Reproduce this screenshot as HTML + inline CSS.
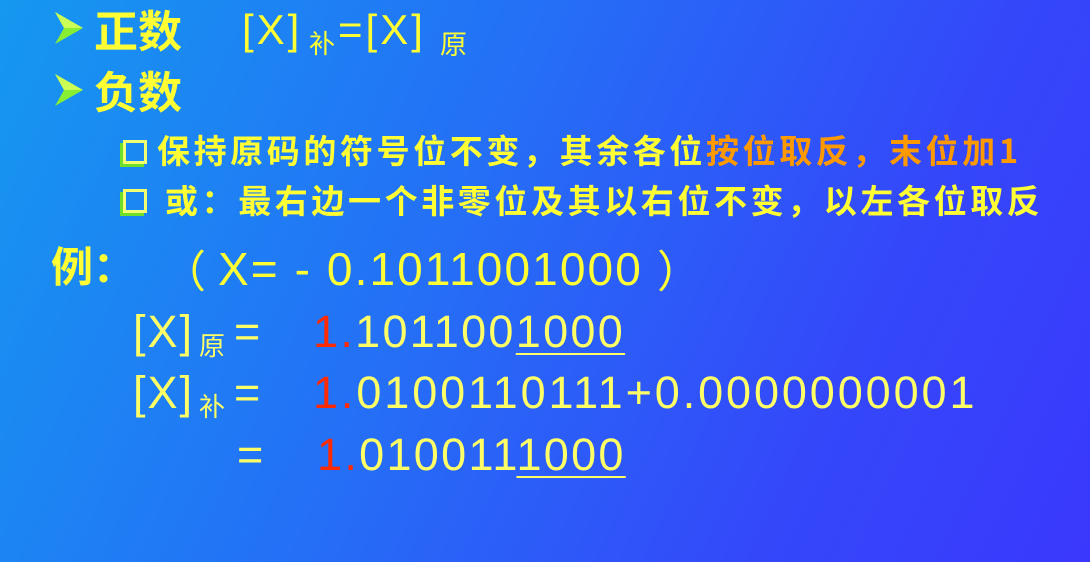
<!DOCTYPE html>
<html><head><meta charset="utf-8"><style>
html,body{margin:0;padding:0}
body{width:1090px;height:562px;overflow:hidden;position:relative;background:linear-gradient(115deg,#1598f0 0%,#2470f6 40%,#3448fa 75%,#3a38fc 100%);font-family:"Liberation Sans","Noto Sans CJK SC",sans-serif;color:#ffff33}
.a{position:absolute;white-space:nowrap;line-height:1}
.cjk{font-family:"Noto Sans CJK SC","WenQuanYi Zen Hei",sans-serif}
.b{font-weight:bold}
.y2{color:#ffff66}
.o{color:#ff9900}
.r{color:#ff2a00}
.sq{position:absolute;width:18px;height:18px;border:3px solid #f2ff70;box-shadow:-3px 3px 0 #6ee02a;box-sizing:content-box;background:transparent}
.u{text-decoration:underline;text-decoration-thickness:2px;text-underline-offset:6px}
</style></head><body>
<svg class="a" style="left:55px;top:12px" width="28" height="32" viewBox="0 0 28 32"><polygon points="0,0 28,16 0,32 9,16" fill="#88ee33"/><polygon points="0,0 28,16 9,16" fill="#ccff55"/></svg>
<svg class="a" style="left:55px;top:74px" width="28" height="32" viewBox="0 0 28 32"><polygon points="0,0 28,16 0,32 9,16" fill="#88ee33"/><polygon points="0,0 28,16 9,16" fill="#ccff55"/></svg>

<div class="a cjk b" style="left:94px;top:6px;font-size:44px;letter-spacing:0px">正数</div>
<div class="a" style="left:242px;top:9px;font-size:42px;letter-spacing:3px">[X]</div>
<div class="a cjk" style="left:309px;top:30px;font-size:26px">补</div>
<div class="a" style="left:338px;top:9px;font-size:42px;letter-spacing:3px">=[X]</div>
<div class="a cjk" style="left:440px;top:29px;font-size:27px">原</div>

<div class="a cjk b" style="left:94px;top:67px;font-size:44px;letter-spacing:0px">负数</div>

<div class="sq" style="left:123px;top:140px"></div>
<div class="a cjk b" style="left:157px;top:133px;font-size:33px;letter-spacing:3.6px">保持原码的符号位不变，其余各位<span class="o">按位取反，末位加1</span></div>
<div class="sq" style="left:123px;top:189px"></div>
<div class="a cjk b" style="left:165px;top:183px;font-size:33px;letter-spacing:3.6px">或：最右边一个非零位及其以右位不变，以左各位取反</div>

<div class="a cjk b" style="left:51px;top:244px;font-size:42px">例：</div>
<div class="a cjk" style="left:162px;top:246px;font-size:44px">（</div>
<div class="a" style="left:218px;top:246px;font-size:46px;letter-spacing:2.1px">X= - 0.1011001000</div>
<div class="a cjk" style="left:657px;top:246px;font-size:44px">）</div>

<div class="a y2" style="left:133px;top:309px;font-size:45px;letter-spacing:2px">[X]</div>
<div class="a cjk y2" style="left:199px;top:332px;font-size:26px">原</div>
<div class="a y2" style="left:234px;top:309px;font-size:45px">=</div>
<div class="a y2" style="left:313px;top:309px;font-size:45px;letter-spacing:2.3px"><span class="r">1.</span>101100<span class="u">1000</span></div>

<div class="a y2" style="left:133px;top:370px;font-size:45px;letter-spacing:2px">[X]</div>
<div class="a cjk y2" style="left:199px;top:393px;font-size:26px">补</div>
<div class="a y2" style="left:234px;top:370px;font-size:45px">=</div>
<div class="a y2" style="left:313px;top:370px;font-size:45px;letter-spacing:2.9px"><span class="r">1.</span>0100110111+0.0000000001</div>

<div class="a y2" style="left:237px;top:432px;font-size:45px">=</div>
<div class="a y2" style="left:317px;top:432px;font-size:45px;letter-spacing:2.3px"><span class="r">1.</span>010011<span class="u">1000</span></div>
</body></html>
